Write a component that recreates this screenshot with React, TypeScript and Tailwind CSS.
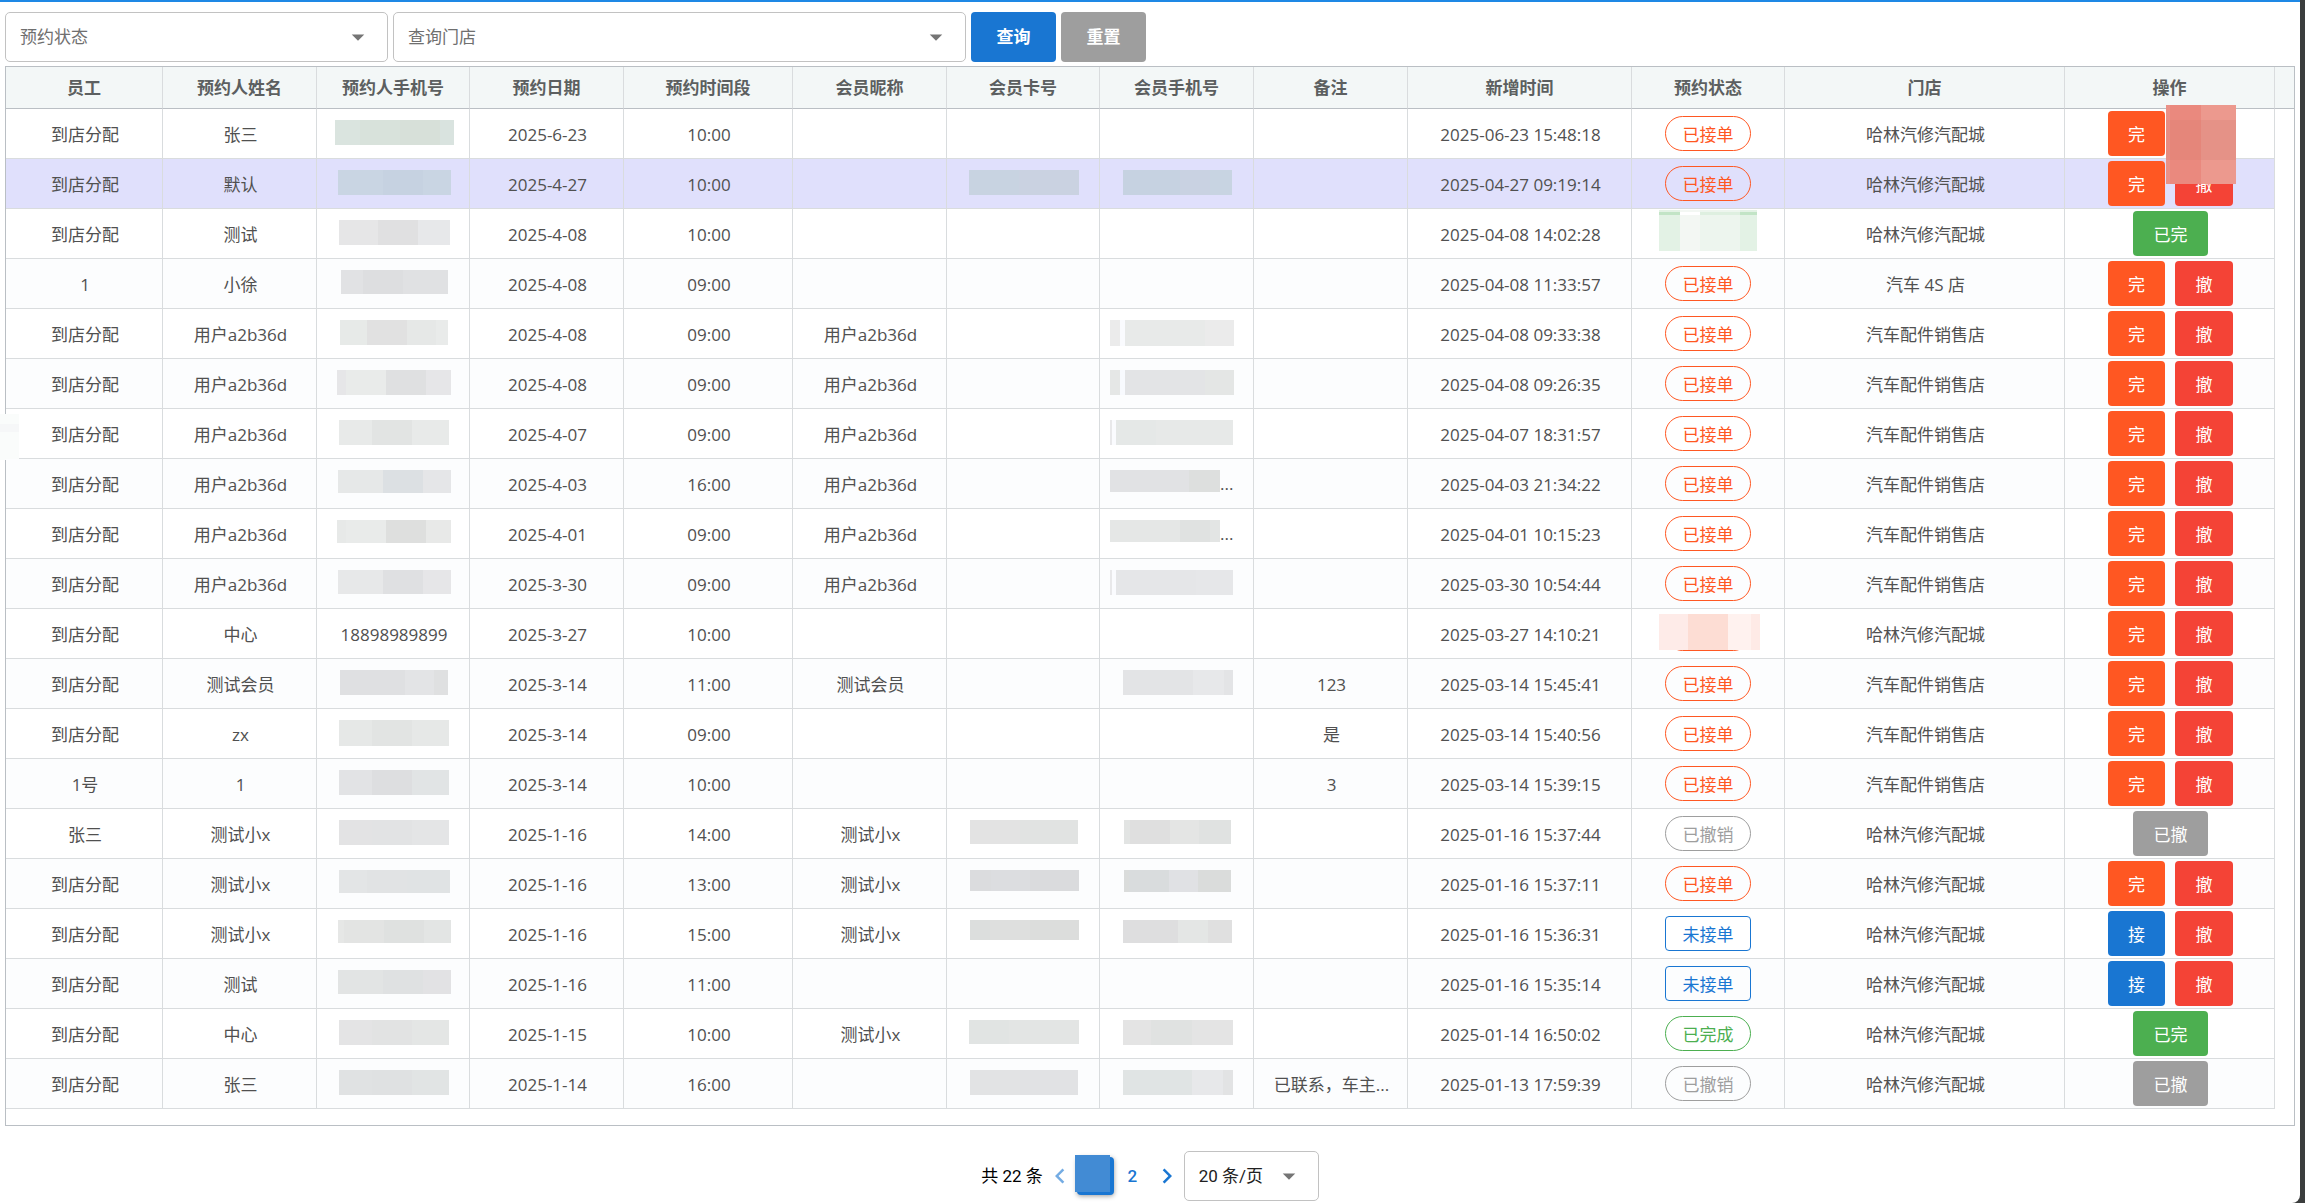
import { useState } from 'react';
import type { ReactNode } from 'react';
import clsx from 'clsx';
import { MdArrowDropDown, MdChevronLeft, MdChevronRight } from 'react-icons/md';

// a masked value: coloured tiles side by side, [width, color]
type Mask = {
    h: number;
    tiles: [number, string][];
    left?: boolean;
    more?: boolean;
};

type Row = {
    staff: string;
    name: string;
    phone: Mask | string;
    date: string;
    time: string;
    nick?: string;
    card?: Mask;
    memberPhone?: Mask;
    remark?: string;
    created: string;
    status: '已接单' | '未接单' | '已完成' | '已撤销';
    shop: string;
};

const SHOP_A = "哈林汽修汽配城";
const SHOP_B = "汽车配件销售店";

const columns = [
    { title: "员工", width: "w-[157px]" },
    { title: "预约人姓名", width: "w-[154px]" },
    { title: "预约人手机号", width: "w-[153px]" },
    { title: "预约日期", width: "w-[154px]" },
    { title: "预约时间段", width: "w-[169px]" },
    { title: "会员昵称", width: "w-[154px]" },
    { title: "会员卡号", width: "w-[153px]" },
    { title: "会员手机号", width: "w-[154px]" },
    { title: "备注", width: "w-[154px]" },
    { title: "新增时间", width: "w-[224px]" },
    { title: "预约状态", width: "w-[153px]" },
    { title: "门店", width: "w-[280px]" },
    { title: "操作", width: "w-[210px]" }
];

const rows: Row[] = [
    {
        staff: "到店分配", name: "张三", date: "2025-6-23", time: "10:00",
        phone: { h: 25, tiles: [[25, '#dae4df'], [40, '#d8e2db'], [40, '#d7e0d9'], [14, '#d9e3df']] },
        created: "2025-06-23 15:48:18", status: "已接单", shop: SHOP_A
    },
    {
        staff: "到店分配", name: "默认", date: "2025-4-27", time: "10:00",
        phone: { h: 25, tiles: [[45, '#c9d5e3'], [40, '#c6d2e1'], [28, '#c9d5e3']] },
        card: { h: 25, tiles: [[50, '#c8d3e1'], [60, '#cad2e1']] },
        memberPhone: { h: 25, tiles: [[57, '#c6d2e1'], [30, '#c9d2e2'], [22, '#c8d4e2']] },
        created: "2025-04-27 09:19:14", status: "已接单", shop: SHOP_A
    },
    {
        staff: "到店分配", name: "测试", date: "2025-4-08", time: "10:00",
        phone: { h: 25, tiles: [[39, '#e6e6e7'], [40, '#e0e0e1'], [32, '#e7e8ea']] },
        created: "2025-04-08 14:02:28", status: "已完成", shop: SHOP_A
    },
    {
        staff: "1", name: "小徐", date: "2025-4-08", time: "09:00",
        phone: { h: 24, tiles: [[22, '#e1e2e4'], [40, '#dddee0'], [45, '#e0e1e3']] },
        created: "2025-04-08 11:33:57", status: "已接单", shop: "汽车 4S 店"
    },
    {
        staff: "到店分配", name: "用户a2b36d", date: "2025-4-08", time: "09:00", nick: "用户a2b36d",
        phone: { h: 25, tiles: [[27, '#e7eae8'], [40, '#e1e1e1'], [29, '#e6e8e7'], [12, '#e9ebea']] },
        memberPhone: { h: 26, left: true, tiles: [[10, '#ebebeb'], [5, '#fafbfe'], [80, '#e8eae9'], [29, '#ebebeb']] },
        created: "2025-04-08 09:33:38", status: "已接单", shop: SHOP_B
    },
    {
        staff: "到店分配", name: "用户a2b36d", date: "2025-4-08", time: "09:00", nick: "用户a2b36d",
        phone: { h: 25, tiles: [[9, '#e6e6e8'], [40, '#e9ebea'], [40, '#dfe0e1'], [25, '#e6e6e8']] },
        memberPhone: { h: 25, left: true, tiles: [[10, '#e5e7e6'], [5, '#f8fafe'], [80, '#e3e4e6'], [29, '#e4e6e5']] },
        created: "2025-04-08 09:26:35", status: "已接单", shop: SHOP_B
    },
    {
        staff: "到店分配", name: "用户a2b36d", date: "2025-4-07", time: "09:00", nick: "用户a2b36d",
        phone: { h: 25, tiles: [[33, '#e8eae9'], [40, '#e2e4e3'], [37, '#e8eae9']] },
        memberPhone: { h: 25, left: true, tiles: [[2, '#e8e8ea'], [4, '#fafbfe'], [40, '#e5e8e7'], [77, '#e7e9e8']] },
        created: "2025-04-07 18:31:57", status: "已接单", shop: SHOP_B
    },
    {
        staff: "到店分配", name: "用户a2b36d", date: "2025-4-03", time: "16:00", nick: "用户a2b36d",
        phone: { h: 23, tiles: [[45, '#e6e8e8'], [40, '#dce0e3'], [28, '#e5e6e8']] },
        memberPhone: { h: 22, left: true, more: true, tiles: [[79, '#e1e2e4'], [31, '#dddfde']] },
        created: "2025-04-03 21:34:22", status: "已接单", shop: SHOP_B
    },
    {
        staff: "到店分配", name: "用户a2b36d", date: "2025-4-01", time: "09:00", nick: "用户a2b36d",
        phone: { h: 23, tiles: [[9, '#e7e9e8'], [40, '#e9ebea'], [40, '#dedfde'], [25, '#e8e9e8']] },
        memberPhone: { h: 22, left: true, more: true, tiles: [[70, '#e5e7e6'], [30, '#e0e2e1'], [10, '#e3e5e4']] },
        created: "2025-04-01 10:15:23", status: "已接单", shop: SHOP_B
    },
    {
        staff: "到店分配", name: "用户a2b36d", date: "2025-3-30", time: "09:00", nick: "用户a2b36d",
        phone: { h: 24, tiles: [[45, '#e7e8e9'], [40, '#dfe0e2'], [28, '#e6e6e8']] },
        memberPhone: { h: 25, left: true, tiles: [[2, '#e8e8ea'], [4, '#fafbfe'], [80, '#e5e6e8'], [37, '#e6e7e9']] },
        created: "2025-03-30 10:54:44", status: "已接单", shop: SHOP_B
    },
    {
        staff: "到店分配", name: "中心", phone: "18898989899", date: "2025-3-27", time: "10:00",
        created: "2025-03-27 14:10:21", status: "已接单", shop: SHOP_A
    },
    {
        staff: "到店分配", name: "测试会员", date: "2025-3-14", time: "11:00", nick: "测试会员", remark: "123",
        phone: { h: 25, tiles: [[65, '#dfe0e2'], [29, '#e3e4e6'], [14, '#dfe0e1']] },
        memberPhone: { h: 25, tiles: [[70, '#e3e4e6'], [31, '#e7e8ea'], [9, '#e3e4e6']] },
        created: "2025-03-14 15:45:41", status: "已接单", shop: SHOP_B
    },
    {
        staff: "到店分配", name: "zx", date: "2025-3-14", time: "09:00", remark: "是",
        phone: { h: 26, tiles: [[33, '#e6e8e7'], [40, '#e2e4e3'], [37, '#e6e8e7']] },
        created: "2025-03-14 15:40:56", status: "已接单", shop: SHOP_B
    },
    {
        staff: "1号", name: "1", date: "2025-3-14", time: "10:00", remark: "3",
        phone: { h: 25, tiles: [[33, '#e2e3e5'], [40, '#dddee0'], [37, '#e1e4e5']] },
        created: "2025-03-14 15:39:15", status: "已接单", shop: SHOP_B
    },
    {
        staff: "张三", name: "测试小x", date: "2025-1-16", time: "14:00", nick: "测试小x",
        phone: { h: 25, tiles: [[33, '#e3e3e4'], [40, '#e2e3e4'], [37, '#e4e5e6']] },
        card: { h: 24, tiles: [[50, '#e3e3e3'], [58, '#e1e3e2']] },
        memberPhone: { h: 24, tiles: [[6, '#e2e4e3'], [40, '#dfdfdf'], [29, '#e4e5e4'], [32, '#e0e2e1']] },
        created: "2025-01-16 15:37:44", status: "已撤销", shop: SHOP_A
    },
    {
        staff: "到店分配", name: "测试小x", date: "2025-1-16", time: "13:00", nick: "测试小x",
        phone: { h: 23, tiles: [[28, '#e3e5e6'], [40, '#e1e3e4'], [43, '#e0e3e4']] },
        card: { h: 21, tiles: [[21, '#dbdcde'], [39, '#dcdde0'], [49, '#dadbdd']] },
        memberPhone: { h: 22, tiles: [[5, '#dadcdb'], [40, '#d9dcdd'], [29, '#e0e1e4'], [33, '#dadcdb']] },
        created: "2025-01-16 15:37:11", status: "已接单", shop: SHOP_A
    },
    {
        staff: "到店分配", name: "测试小x", date: "2025-1-16", time: "15:00", nick: "测试小x",
        phone: { h: 23, tiles: [[6, '#e6e7e6'], [40, '#e3e4e3'], [40, '#dfe1e0'], [27, '#e3e5e4']] },
        card: { h: 20, tiles: [[20, '#dcdedd'], [40, '#dedfde'], [49, '#dcdddc']] },
        memberPhone: { h: 23, tiles: [[55, '#dededf'], [30, '#e4e6e5'], [24, '#e0e0e0']] },
        created: "2025-01-16 15:36:31", status: "未接单", shop: SHOP_A
    },
    {
        staff: "到店分配", name: "测试", date: "2025-1-16", time: "11:00",
        phone: { h: 24, tiles: [[45, '#e2e4e4'], [40, '#dfe1e2'], [28, '#e2e2e4']] },
        created: "2025-01-16 15:35:14", status: "未接单", shop: SHOP_A
    },
    {
        staff: "到店分配", name: "中心", date: "2025-1-15", time: "10:00", nick: "测试小x",
        phone: { h: 25, tiles: [[33, '#e4e4e5'], [40, '#e2e3e3'], [37, '#e4e6e5']] },
        card: { h: 24, tiles: [[40, '#e1e4e3'], [70, '#e3e5e4']] },
        memberPhone: { h: 25, tiles: [[28, '#e4e4e4'], [41, '#e0e2e1'], [41, '#e4e4e4']] },
        created: "2025-01-14 16:50:02", status: "已完成", shop: SHOP_A
    },
    {
        staff: "到店分配", name: "张三", date: "2025-1-14", time: "16:00", remark: "已联系，车主...",
        phone: { h: 25, tiles: [[33, '#e0e2e3'], [40, '#dfe1e2'], [37, '#e1e4e4']] },
        card: { h: 25, tiles: [[50, '#e2e3e4'], [58, '#e1e2e4']] },
        memberPhone: { h: 25, tiles: [[69, '#e0e4e4'], [31, '#e7e8ea'], [10, '#e2e3e4']] },
        created: "2025-01-13 17:59:39", status: "已撤销", shop: SHOP_A
    }
];

const statusStyle = {
    "已接单": "rounded-[18px] border-[#ff5722] text-[#ff5722]",
    "未接单": "rounded-[4px] border-[#1976d2] text-[#1976d2]",
    "已完成": "rounded-[18px] border-[#4caf50] text-[#4caf50]",
    "已撤销": "rounded-[18px] border-[#9e9e9e] text-[#9e9e9e]"
};

const MaskBar = ({ mask }: { mask: Mask }) => (
    <div className={clsx("flex h-[49px]", mask.left ? "pl-[10px]" : "pl-[2px] justify-center")}>
        <div className="flex mt-[11px]" style={{ height: mask.h }}>
            {mask.tiles.map(([width, color], i) => (
                <div key={i} style={{ width, backgroundColor: color }} />
            ))}
        </div>
        {mask.more && <span className="self-center">...</span>}
    </div>
);

const Text = ({ children }: { children?: ReactNode }) => (
    <div className="pt-[2px] pl-[14px] pr-[12px] truncate">{children}</div>
);

const Status = ({ row, index }: { row: Row; index: number }) => (
    <div className="relative w-[86px] mx-auto">
        <div className={clsx("h-[35px] border pt-[2px] flex items-center justify-center", statusStyle[row.status])}>
            {index !== 2 && index !== 10 && row.status}
        </div>
        {index === 2 && (
            <div className="absolute -top-[6px] -left-[6px] flex h-[41px]">
                <div className="w-[21px] bg-[#e3f2e5] pt-[2px]"><div className="h-[3px] bg-[#c2e4c6]" /></div>
                <div className="w-[20px] bg-[#f3f7f3] pt-[2px]"><div className="h-[3px] bg-white" /></div>
                <div className="w-[40px] bg-[#edf5ee] pt-[2px]"><div className="h-[3px] bg-[#deefe0]" /></div>
                <div className="w-[17px] bg-[#e3f2e5] pt-[2px]"><div className="h-[3px] bg-[#c2e4c6]" /></div>
            </div>
        )}
        {index === 10 && (
            <div className="absolute -top-[2px] -left-[6px] flex h-[36px]">
                <div className="w-[29px] bg-[#feebe8]" />
                <div className="w-[40px] bg-[#fdddd4]" />
                <div className="w-[23px] bg-[#fff2ef]" />
                <div className="w-[9px] bg-[#feeae6]" />
            </div>
        )}
    </div>
);

const actionBtn = "h-[45px] pt-[2px] rounded-[4px] text-white cursor-pointer";

const Actions = ({ row, index }: { row: Row; index: number }) => {
    if (row.status === "已完成") {
        return <button className={clsx(actionBtn, "w-[75px] bg-[#4caf50]")}>已完</button>;
    }
    if (row.status === "已撤销") {
        return <button className={clsx(actionBtn, "w-[75px] bg-[#9e9e9e]")}>已撤</button>;
    }
    return (
        <div className="flex justify-center gap-[10px]">
            {row.status === "未接单"
                ? <button className={clsx(actionBtn, "w-[57px] bg-[#1976d2]")}>接</button>
                : <button className={clsx(actionBtn, "w-[57px] bg-[#ff5722]")}>完</button>}
            <div className="relative">
                <button className={clsx(actionBtn, "w-[58px] bg-[#f44336]")}>撤</button>
                {index === 0 && (
                    <div className="absolute z-10 -top-[6px] -left-[9px] w-[70px] h-[79px] grid grid-cols-[4px_31px_35px] grid-rows-[15px_40px_24px]">
                        <div className="bg-[#ea9187]" />
                        <div className="bg-[#ea897e]" />
                        <div className="bg-[#ec998e]" />
                        <div className="bg-[#e68d82]" />
                        <div className="bg-[#e5867a]" />
                        <div className="bg-[#e59287]" />
                        <div className="bg-[#ea9187]" />
                        <div className="bg-[#ea897e]" />
                        <div className="bg-[#ec998e]" />
                    </div>
                )}
            </div>
        </div>
    );
};

const SelectBox = ({ label, options, className, textClass }: { label: string; options: string[]; className: string; textClass: string }) => (
    <div className={clsx("relative h-[50px]", className)}>
        <select
            aria-label={label}
            className={clsx("appearance-none w-full h-full pl-[14px] pr-[45px] bg-white border border-[#c2c2c2] rounded-[5px] outline-none", textClass)}
        >
            {options.map(o => <option key={o}>{o}</option>)}
        </select>
        <MdArrowDropDown className="absolute right-[15px] top-[10px] size-[30px] text-[#757575] pointer-events-none" />
    </div>
);

export default function App() {
    const [selected, setSelected] = useState(1);

    return (
        <div className="min-h-screen bg-[#3b3d3d] pr-[5px] font-['Open_Sans','Noto_Sans_CJK_SC',sans-serif] text-[17px] leading-[24px]">
            <div className="min-h-screen bg-white border-t-2 border-[#1e88e5] rounded-br-[8px] pl-[5px] pr-[5px] pt-[10px]">
                {/* Filters */}
                <div className="flex gap-[5px] mb-[4px]">
                    <SelectBox label="预约状态" options={["预约状态"]} className="w-[383px]" textClass="text-[#6f6f6f]" />
                    <SelectBox label="查询门店" options={["查询门店"]} className="w-[573px]" textClass="text-[#6f6f6f]" />
                    <button className="w-[85px] h-[50px] rounded-[4px] bg-[#1976d2] text-white font-bold cursor-pointer">查询</button>
                    <button className="w-[85px] h-[50px] rounded-[4px] bg-[#9e9e9e] text-white font-bold cursor-pointer">重置</button>
                </div>

                {/* Grid */}
                <div className="border border-[#babfc4] pb-[16px]">
                    <table className="w-full table-fixed border-separate border-spacing-0 text-center text-[#505050]">
                        <thead>
                            <tr>
                                {columns.map(col => (
                                    <th
                                        key={col.title}
                                        className={clsx("h-[42px] p-0 bg-[#f3f7f7] border-b border-b-[#babfc4] border-r border-r-[#d9dcde] font-bold text-[#5c5f60]", col.width)}
                                    >
                                        {col.title}
                                    </th>
                                ))}
                                <th className="p-0 bg-[#f3f7f7] border-b border-b-[#babfc4]" />
                            </tr>
                        </thead>
                        <tbody>
                            {rows.map((row, index) => {
                                const cell = clsx(
                                    "h-[50px] p-0 border-b border-r border-[#d9dcde]",
                                    index === selected ? "bg-[#e0e0fc]" : index % 2 ? "bg-[#fcfdfe]" : "bg-white"
                                );
                                return (
                                    <tr key={row.created} onClick={() => setSelected(index)}>
                                        <td className={clsx(cell, "relative")}>
                                            <Text>{row.staff}</Text>
                                            {index === 6 && (
                                                <div className="absolute -left-[6px] top-[5px] w-[19px] h-[46px] bg-[#fafcfb] pt-[10px]">
                                                    <div className="h-[8px] bg-[#f6f7f8]" />
                                                </div>
                                            )}
                                        </td>
                                        <td className={cell}><Text>{row.name}</Text></td>
                                        <td className={cell}>
                                            {typeof row.phone === 'string' ? <Text>{row.phone}</Text> : <MaskBar mask={row.phone} />}
                                        </td>
                                        <td className={cell}><Text>{row.date}</Text></td>
                                        <td className={cell}><Text>{row.time}</Text></td>
                                        <td className={cell}><Text>{row.nick}</Text></td>
                                        <td className={cell}>{row.card && <MaskBar mask={row.card} />}</td>
                                        <td className={cell}>{row.memberPhone && <MaskBar mask={row.memberPhone} />}</td>
                                        <td className={cell}><Text>{row.remark}</Text></td>
                                        <td className={cell}><Text>{row.created}</Text></td>
                                        <td className={cell}><Status row={row} index={index} /></td>
                                        <td className={cell}><Text>{row.shop}</Text></td>
                                        <td className={clsx(cell, "pl-[2px]")}><Actions row={row} index={index} /></td>
                                        <td className="p-0" />
                                    </tr>
                                );
                            })}
                        </tbody>
                    </table>
                </div>

                {/* Pagination */}
                <div className="flex items-center justify-center pt-[25px] font-[Roboto,'Noto_Sans_CJK_SC',sans-serif] text-black">
                    <span>共 22 条</span>
                    <button aria-label="上一页" className="w-[34px] h-[38px] flex items-center justify-center text-[#1976d2] opacity-60">
                        <MdChevronLeft className="size-[30px]" />
                    </button>
                    <div className="relative">
                        <button aria-label="第一页" className="block w-[37px] h-[38px] rounded-[4px] bg-[#1976d2] shadow-[0_1px_5px_rgba(0,0,0,0.4)]" />
                        <div className="absolute -left-[2px] -top-[2px] w-[35px] h-[37px] bg-[#428bd4]" />
                    </div>
                    <button className="w-[37px] h-[38px] text-[#1976d2] font-medium cursor-pointer">2</button>
                    <button aria-label="下一页" className="w-[33px] h-[38px] flex items-center justify-center text-[#1976d2] cursor-pointer">
                        <MdChevronRight className="size-[30px]" />
                    </button>
                    <SelectBox label="每页条数" options={["20 条/页"]} className="w-[135px]" textClass="text-[#212121]" />
                </div>
            </div>
        </div>
    );
}
